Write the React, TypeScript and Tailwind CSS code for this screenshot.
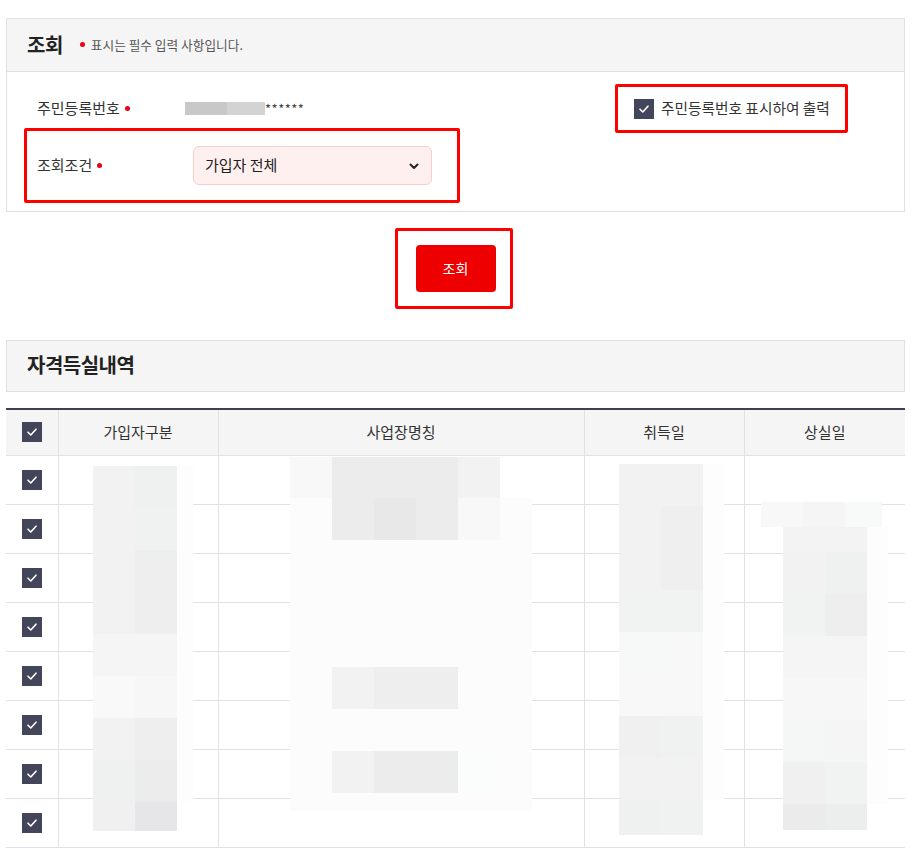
import React from 'react';

type Block = { x: number; y: number; w: number; h: number; c: string };

// mosaic blur over the table body (page coords, table wrapper starts at x 6, y 408)
const mosaic: Block[] = [];

const addColumn = (x: number, y0: number, rows: number[], left: string[], right: string[], bw = 42) => {
    let y = y0;
    rows.forEach((h, i) => {
        mosaic.push({ x, y, w: bw, h, c: left[i] });
        mosaic.push({ x: x + bw, y, w: bw, h, c: right[i] });
        y += h;
    });
};

// 가입자구분
mosaic.push({ x: 93, y: 466, w: 100, h: 336, c: '#fdfdfd' });
addColumn(93, 466, [42, 42, 42, 42, 42, 42, 42, 42, 29],
    ['#f2f2f2', '#f2f2f2', '#f2f2f2', '#f2f2f2', '#f5f5f5', '#f9f9f9', '#f2f2f2', '#eff0f0', '#f0f0f0'],
    ['#eff0f0', '#f0f1f1', '#eeeeee', '#eeeeee', '#f5f5f5', '#f7f7f7', '#eeeeee', '#ececec', '#e6e6e8']);

// 사업장명칭
mosaic.push({ x: 290, y: 498, w: 242, h: 313, c: '#fcfcfc' });
mosaic.push(
    { x: 290, y: 457, w: 42, h: 41, c: '#f8f8f8' },
    { x: 332, y: 457, w: 126, h: 41, c: '#ececec' },
    { x: 458, y: 457, w: 42, h: 41, c: '#f2f2f2' },
    { x: 332, y: 498, w: 42, h: 42, c: '#ececec' },
    { x: 374, y: 498, w: 42, h: 42, c: '#e8e8e8' },
    { x: 416, y: 498, w: 42, h: 42, c: '#ececec' },
    { x: 458, y: 498, w: 42, h: 42, c: '#f8f8f8' },
    { x: 332, y: 667, w: 42, h: 42, c: '#f2f2f2' },
    { x: 374, y: 667, w: 84, h: 42, c: '#eeeeee' },
    { x: 332, y: 751, w: 42, h: 42, c: '#f2f2f2' },
    { x: 374, y: 751, w: 84, h: 42, c: '#ececec' },
    { x: 458, y: 751, w: 42, h: 42, c: '#fbfcfc' },
);

// 취득일
mosaic.push({ x: 619, y: 464, w: 105, h: 336, c: '#fdfdfd' });
addColumn(619, 464, [42, 42, 42, 42, 42, 42, 42, 42, 35],
    ['#f2f2f2', '#f2f2f2', '#f2f2f2', '#f1f2f2', '#f7f8f8', '#f8f8f8', '#f0f0f0', '#f2f2f2', '#eff0f0'],
    ['#f2f2f2', '#efefef', '#efefef', '#f1f2f2', '#f8f8f8', '#f8f8f8', '#f0f1f1', '#f2f2f2', '#f0f1f1']);

// 상실일
mosaic.push(
    { x: 761, y: 502, w: 42, h: 25, c: '#f8f8f8' },
    { x: 803, y: 502, w: 42, h: 25, c: '#f5f5f5' },
    { x: 845, y: 502, w: 37, h: 25, c: '#f8f9f9' },
    { x: 783, y: 527, w: 105, h: 277, c: '#fdfdfd' },
);
addColumn(783, 527, [25, 42, 42, 42, 42, 42, 42, 26],
    ['#f3f3f3', '#f2f2f2', '#f1f2f2', '#f5f5f5', '#f7f7f7', '#f5f6f6', '#f0f0f0', '#ebebeb'],
    ['#f3f3f3', '#eff1f1', '#eeeeee', '#f5f5f5', '#f7f7f7', '#f5f5f5', '#f1f2f2', '#eceeee']);

const CheckBox: React.FC = () => (
    <span className="w-5 h-5 bg-[#43455a] flex items-center justify-center shrink-0">
        <svg width="12" height="12" viewBox="0 0 12 12" fill="none">
            <path d="M2 6.2 L4.8 9 L10 3.2" stroke="white" strokeWidth="1.6" strokeLinecap="round" strokeLinejoin="round" />
        </svg>
    </span>
);

const RedDot: React.FC = () => <span className="w-[5px] h-[5px] rounded-full bg-[#e60012] inline-block" />;

const rows = Array.from({ length: 8 });

export default function App() {
    return (
        <div className="w-[914px] min-h-[849px] bg-white pt-[18px] pl-[6px] text-[#333] font-['Noto_Sans_CJK_KR','Noto_Sans',sans-serif]">
            {/* 조회 panel */}
            <div className="w-[899px] border border-[#e1e1e1]">
                <div className="h-[53px] bg-[#f5f5f5] border-b border-[#e1e1e1] flex items-center pl-[20px]">
                    <h2 className="text-[20px] font-bold text-[#222] tracking-tight">조회</h2>
                    <span className="ml-[17px] flex items-center gap-[6px] text-[12.7px] text-[#555]">
                        <RedDot />
                        표시는 필수 입력 사항입니다.
                    </span>
                </div>

                <div className="pt-[12px] pb-[8px]">
                    <div className="h-[49px] flex items-center justify-between">
                        <div className="flex items-center pl-[30px]">
                            <div className="w-[148px] flex items-center gap-[5px] text-[15px]">
                                주민등록번호 <RedDot />
                            </div>
                            <div className="flex items-center">
                                <span className="w-[42px] h-[13px] bg-[#c8c8c8]" />
                                <span className="w-[38px] h-[13px] bg-[#d3d3d3]" />
                                <span className="text-[13px] tracking-[0.5px] text-[#444]">******</span>
                            </div>
                        </div>
                        <div className="mr-[56px] w-[233px] h-[49px] border-[3px] border-[#ff0000] rounded-[2px] flex items-center pl-[16px] gap-[7px]">
                            <CheckBox />
                            <span className="text-[14.7px] text-[#333]">주민등록번호 표시하여 출력</span>
                        </div>
                    </div>

                    <div className="-mt-[5px] ml-[17px] w-[436px] h-[75px] border-[3px] border-[#ff0000] rounded-[2px] flex items-center pl-[10px]">
                        <div className="w-[156px] flex items-center gap-[5px] text-[15px]">
                            조회조건 <RedDot />
                        </div>
                        <div className="w-[239px] h-[39px] bg-[#fff0f0] border border-[#f8cccc] rounded-[6px] flex items-center justify-between px-[11px]">
                            <span className="text-[15px] text-[#222]">가입자 전체</span>
                            <svg width="12" height="12" viewBox="0 0 12 12" fill="none">
                                <path d="M2.5 4.5 L6 8 L9.5 4.5" stroke="#222" strokeWidth="2" strokeLinecap="round" strokeLinejoin="round" />
                            </svg>
                        </div>
                    </div>
                </div>
            </div>

            {/* search button */}
            <div className="w-[899px] flex justify-center mt-[16px] pr-[3px]">
                <div className="w-[118px] h-[81px] border-[3px] border-[#ff0000] rounded-[2px] flex items-center justify-center">
                    <button className="w-[80px] h-[47px] bg-[#ee0000] rounded-[4px] text-white text-[14px] ml-[3px]">조회</button>
                </div>
            </div>

            {/* 자격득실내역 */}
            <div className="w-[899px] h-[52px] mt-[31px] bg-[#f5f5f5] border border-[#e1e1e1] flex items-center pl-[20px]">
                <h2 className="text-[20px] font-bold text-[#222] tracking-tight -mt-[2px]">자격득실내역</h2>
            </div>

            <div className="relative w-[899px] mt-[16px]">
                <table className="w-full border-collapse table-fixed border-t-[2px] border-[#3e3f55]">
                    <colgroup>
                        <col className="w-[52px]" />
                        <col className="w-[160px]" />
                        <col className="w-[366px]" />
                        <col className="w-[160px]" />
                        <col />
                    </colgroup>
                    <thead>
                        <tr className="h-[46px] bg-[#f5f5f5] text-[15px] font-normal text-[#333]">
                            <th className="border-b border-r border-[#e2e2e2] font-normal">
                                <div className="flex justify-center"><CheckBox /></div>
                            </th>
                            <th className="border-b border-r border-[#e2e2e2] font-normal">가입자구분</th>
                            <th className="border-b border-r border-[#e2e2e2] font-normal">사업장명칭</th>
                            <th className="border-b border-r border-[#e2e2e2] font-normal">취득일</th>
                            <th className="border-b border-[#e2e2e2] font-normal">상실일</th>
                        </tr>
                    </thead>
                    <tbody>
                        {rows.map((_, i) => (
                            <tr key={i} className="h-[49px]">
                                <td className="border-b border-r border-[#e2e2e2]">
                                    <div className="flex justify-center"><CheckBox /></div>
                                </td>
                                <td className="border-b border-r border-[#e2e2e2]" />
                                <td className="border-b border-r border-[#e2e2e2]" />
                                <td className="border-b border-r border-[#e2e2e2]" />
                                <td className="border-b border-[#e2e2e2]" />
                            </tr>
                        ))}
                    </tbody>
                </table>

                {/* pixelated redaction over personal data */}
                {mosaic.map((b, i) => (
                    <div
                        key={i}
                        className="absolute"
                        style={{ left: b.x - 6, top: b.y - 408, width: b.w, height: b.h, background: b.c }}
                    />
                ))}
            </div>
        </div>
    );
}
